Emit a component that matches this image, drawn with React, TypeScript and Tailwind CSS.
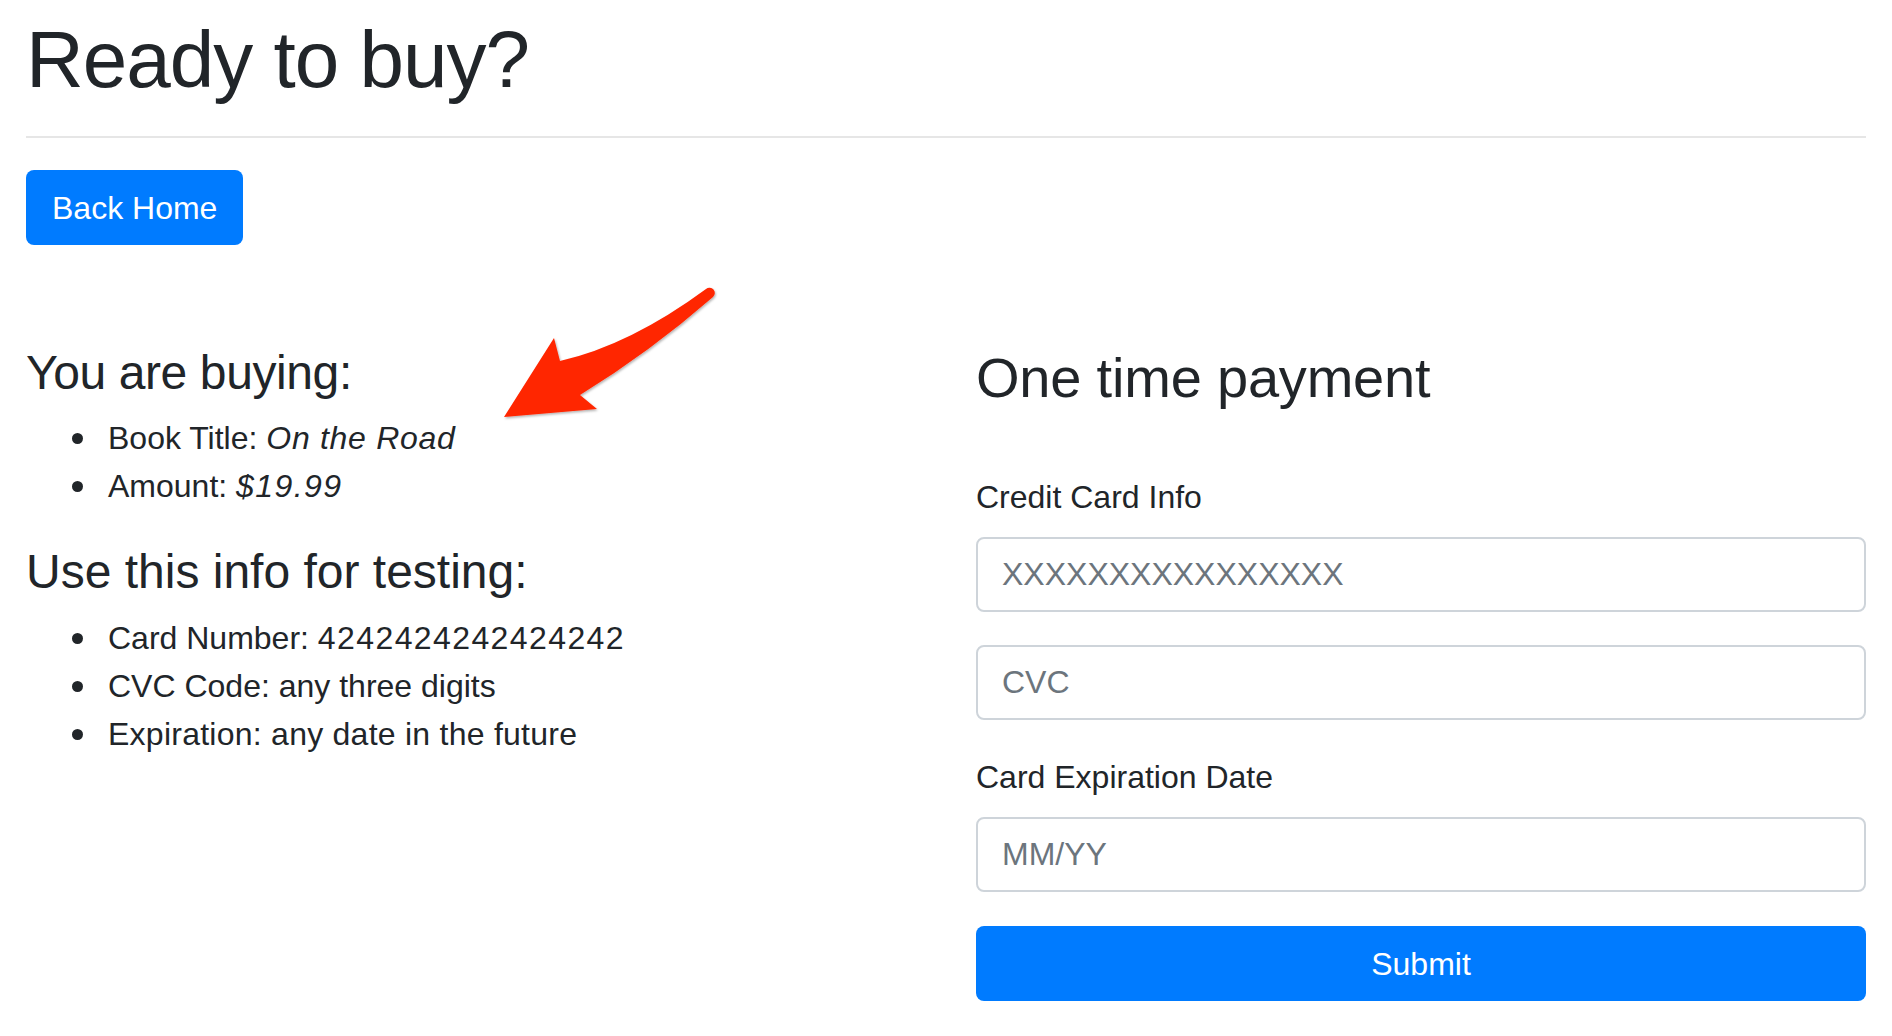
import React from "react";

function Bullet({ children }: { children: React.ReactNode }) {
  return (
    <li className="flex items-center">
      <span className="w-[11px] h-[11px] rounded-full bg-[#212529] shrink-0 mr-[25px]" />
      <span>{children}</span>
    </li>
  );
}

export default function App() {
  const font = { fontFamily: '"Liberation Sans", Arial, sans-serif' };
  const inputCls =
    "h-[75px] w-full rounded-[8px] border-2 border-[#ced4da] px-[24px] text-[32px] text-[#495057] placeholder:text-[#6c757d] outline-none";
  return (
    <div className="relative w-[1892px] min-h-[1036px] bg-white text-[#212529]" style={font}>
      <div className="px-[26px] pt-[12px]">
        <h1 className="text-[80px] leading-[96px] font-normal tracking-[-1px] m-0">Ready to buy?</h1>
        <div className="mt-[28px] h-[2px] bg-[#e6e6e6]" />
        <div className="mt-[32px]">
          <button className="h-[75px] px-[26px] rounded-[8px] bg-[#007bff] text-white text-[32px] leading-[48px]">
            Back Home
          </button>
        </div>
        <div className="mt-[99px] grid grid-cols-2 gap-x-[60px]">
          <div>
            <h4 className="text-[48px] leading-[58px] font-normal tracking-[-0.4px] mb-[12px]">You are buying:</h4>
            <ul className="pl-[46px] text-[32px] leading-[48px] mb-[33px]">
              <Bullet>
                Book Title: <em className="tracking-[0.7px]">On the Road</em>
              </Bullet>
              <Bullet>
                Amount: <em className="tracking-[1.4px]">$19.99</em>
              </Bullet>
            </ul>
            <h4 className="text-[48px] leading-[58px] font-normal mb-[13px]">Use this info for testing:</h4>
            <ul className="pl-[46px] text-[32px] leading-[48px]">
              <Bullet>
                Card Number: <span className="tracking-[1.4px]">4242424242424242</span>
              </Bullet>
              <Bullet>CVC Code: any three digits</Bullet>
              <Bullet>
                <span className="tracking-[0.25px]">Expiration: any date in the future</span>
              </Bullet>
            </ul>
          </div>
          <div className="flex flex-col">
            <h3 className="text-[56px] leading-[67px] font-normal tracking-[-0.2px]">One time payment</h3>
            <label className="mt-[62px] text-[32px] leading-[48px]">Credit Card Info</label>
            <input className={"mt-[16px] " + inputCls} placeholder="XXXXXXXXXXXXXXXX" style={font} />
            <input className={"mt-[33px] " + inputCls} placeholder="CVC" style={font} />
            <label className="mt-[33px] text-[32px] leading-[48px]">Card Expiration Date</label>
            <input className={"mt-[16px] " + inputCls} placeholder="MM/YY" style={font} />
            <button className="mt-[34px] h-[75px] w-full rounded-[8px] bg-[#007bff] text-white text-[32px] leading-[48px]">
              Submit
            </button>
          </div>
        </div>
      </div>
      <svg
        className="absolute left-0 top-0 pointer-events-none"
        width="1892"
        height="1036"
        viewBox="0 0 1892 1036"
      >
        <defs>
          <filter id="sh" x="-10%" y="-10%" width="130%" height="130%">
            <feDropShadow dx="1" dy="1.5" stdDeviation="1" floodColor="#000" floodOpacity="0.3" />
          </filter>
        </defs>
        <path
          d="M504,417 L554,338 L560,361 Q630,345 706,289 A5,5 0 0 1 713,297 Q650,352 580,395 L597,409 Z"
          fill="#ff2600"
          filter="url(#sh)"
        />
      </svg>
    </div>
  );
}
